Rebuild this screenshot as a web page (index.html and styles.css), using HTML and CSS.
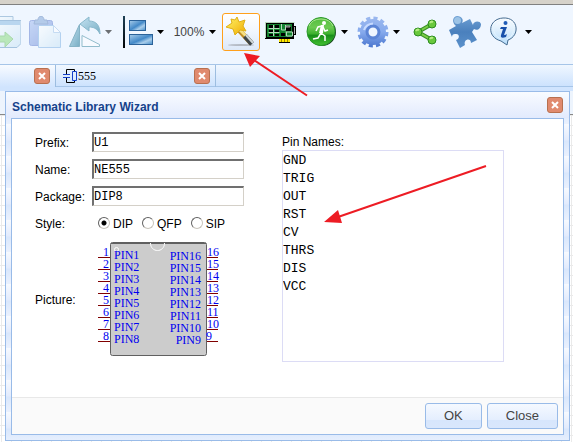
FILE: index.html
```html
<!DOCTYPE html>
<html lang="en">
<head>
<meta charset="utf-8">
<title>Schematic Library Wizard</title>
<link rel="stylesheet" href="styles.css">
</head>
<body>
<div class="app">
  <header class="toolbar">
    <button class="tool first disabled" aria-label="Import">
      <svg class="icon" viewBox="0 0 32 32"><defs><linearGradient id="page" x2="1" y2="1"><stop stop-color="#fff"/><stop offset="1" stop-color="#c6e2f4"/></linearGradient></defs><path d="M3 .5h21v26H3z" fill="url(#page)" stroke="#78a4c9"/><path d="M1 4.500h31v23l-4 4H1z" fill="url(#page)" stroke="#6a9bc6"/><path d="M1 5h30v4H1z" fill="#8ebde2"/><path d="M8 20h8v-4l8 7-8 8v-5H8z" fill="#8ddb83" stroke="#72c06c"/></svg>
    </button>
    <button class="tool disabled" aria-label="Paste">
      <svg class="icon" viewBox="0 0 32 32"><defs><linearGradient id="clip" x2="1" y2="1"><stop stop-color="#a6bff0"/><stop offset="1" stop-color="#6685d5"/></linearGradient></defs><rect x=".5" y="4.500" width="23" height="25" rx="2" fill="url(#clip)" stroke="#6683d2"/><path d="M6 4h3c0-5 6-5 6 0h3l1 4H5z" fill="#84a9d9" stroke="#6487be"/><path d="M9.500 9.500h15l7 7v15h-22z" fill="url(#page)" stroke="#83b3e5"/><path d="M24.500 9.500v7h7z" fill="#fff" stroke="#a3c5e8"/></svg>
    </button>
    <button class="tool menu disabled" aria-label="Rotate">
      <svg class="icon" viewBox="0 0 32 32"><defs><linearGradient id="teal" x2="1" y2="1"><stop stop-color="#a5d4e9"/><stop offset="1" stop-color="#187494"/></linearGradient></defs><path d="M10.500 8.500v22H.500z" fill="url(#teal)" stroke="#307d98"/><path d="M13 19.500l17.500 9v2H13z" fill="#fff" stroke="#478ea3"/><path d="M11 8l9-7v4c7 0 11 4 11 13-3-6-7-7-11-7v4z" fill="url(#teal)" stroke="#3787a4"/></svg>
      <svg class="caret" viewBox="0 0 8 4"><path d="M0 0h7L3.500 4z"/></svg>
    </button>
    <button class="tool menu" aria-label="Align">
      <svg class="icon" viewBox="0 0 32 32"><defs><linearGradient id="bar" x2="1" y2="1"><stop stop-color="#a9cdea"/><stop offset=".5" stop-color="#4389c8"/><stop offset=".7" stop-color="#a9cdea"/><stop offset="1" stop-color="#438cc9"/></linearGradient><linearGradient id="pole" x2="0" y2="1"><stop stop-color="#1e4056"/><stop offset="1" stop-color="#020304"/></linearGradient></defs><path d="M2 0h2v32H2z" fill="url(#pole)"/><rect x="8.500" y="4.500" width="16" height="10" fill="url(#bar)" stroke="#2b6299"/><rect x="8.500" y="18.500" width="23" height="10" fill="url(#bar)" stroke="#2b6299"/></svg>
      <svg class="caret" viewBox="0 0 8 4"><path d="M0 0h7L3.500 4z"/></svg>
    </button>
    <button class="tool menu" aria-label="Zoom">
      <span class="zoom">100%</span>
      <svg class="caret" viewBox="0 0 8 4"><path d="M0 0h7L3.500 4z"/></svg>
    </button>
    <button class="tool selected" aria-label="Schematic library wizard">
      <svg class="icon" viewBox="0 0 32 32"><defs><linearGradient id="star" x2="1" y2="1"><stop stop-color="#fff56a"/><stop offset="1" stop-color="#f0a900"/></linearGradient></defs><ellipse cx="16" cy="29" rx="13" ry="1" fill="#b5bbc5"/><path d="M14 14l12 13" stroke="#c28f24" stroke-width="5"/><path d="M15 14l7 7" stroke="#f5df82" stroke-width="3"/><path d="M20 20l7 8" stroke="#3e4549" stroke-width="5"/><path d="M21 19l7 8" stroke="#d0d7d8" stroke-width="2"/><path d="M12 1l2 5 6-2-2 6 3 5-6-1-5 5-2-6-7-2 6-4-1-4 4 1z" fill="url(#star)" stroke="#dfb018"/></svg>
    </button>
    <button class="tool" aria-label="Printed circuit board">
      <svg class="icon" viewBox="0 0 32 32"><path d="M0 6h29v4h2v9h-2v4h-4v4H14v-4H0z" fill="#000"/><path d="M2 8h25v13H2z" fill="#13832f"/><path d="M14 23h11v3H14z" fill="#ffe900"/><path d="M16.500 23v3m3-3v3m3-3v3" stroke="#9b8500"/><path d="M4 9h4v3H4zm6 0h4v3h-4zM4 14h4v2H4zm6 0h4v2h-4zM4 18h4v2H4zm6 0h4v2h-4zM21 10h5v5h-5zM16 17h4v3h-4z" fill="#000"/><path d="M3.500 12.500h11m-11 4h11M8.500 9v11M16.500 8v6h4v-5m0 7h7v4h-6v-4M.500 6v16m0-15.500h29" stroke="#b6d8bc" fill="none"/><path d="M21 10h4v1h-4zM29.500 11v7" stroke="#a8aca9" fill="none"/></svg>
    </button>
    <button class="tool menu" aria-label="Run simulation">
      <svg class="icon" viewBox="0 0 32 32"><defs><linearGradient id="run" x2="0" y2="1"><stop stop-color="#52bd3d"/><stop offset=".35" stop-color="#6cca52"/><stop offset=".6" stop-color="#3aaf2c"/><stop offset=".62" stop-color="#168c19"/><stop offset="1" stop-color="#42c030"/></linearGradient></defs><circle cx="17" cy="16" r="14" fill="#17421b"/><circle cx="16" cy="15.500" r="14" fill="url(#run)" stroke="#2b992b"/><path d="M4 10Q7 3 16 3t12 7" fill="none" stroke="#a8e48c"/><circle cx="19" cy="7" r="2" fill="#fff"/><path d="M17 10l-4 1-2 4m6-4l-1 6-3 5-5 1m8-6l4 3v5m-2-14l2 4 3-1" fill="none" stroke="#fff" stroke-width="1.500"/><path d="M16 9h3l-1 8h-4z" fill="#fff"/></svg>
      <svg class="caret" viewBox="0 0 8 4"><path d="M0 0h7L3.500 4z"/></svg>
    </button>
    <button class="tool menu" aria-label="Settings">
      <svg class="icon" viewBox="0 0 32 32"><defs><linearGradient id="gear" gradientUnits="userSpaceOnUse" x1="0" y1="0" x2="0" y2="32"><stop stop-color="#9db9ef"/><stop offset=".5" stop-color="#86aaed"/><stop offset="1" stop-color="#4874cd"/></linearGradient></defs><circle cx="16" cy="16" r="13.500" fill="none" stroke="url(#gear)" stroke-width="4" stroke-dasharray="4 3.069"/><circle cx="16" cy="16" r="9" fill="none" stroke="url(#gear)" stroke-width="8"/><circle cx="16" cy="16" r="6" fill="none" stroke="#5c85d6" stroke-width="3"/><path d="M7 14q2-6 9-6.500" fill="none" stroke="#c8dbff" stroke-width="2"/></svg>
      <svg class="caret" viewBox="0 0 8 4"><path d="M0 0h7L3.500 4z"/></svg>
    </button>
    <button class="tool" aria-label="Share">
      <svg class="icon" viewBox="0 0 32 32"><path d="M23 8L9 16l14 8" fill="none" stroke="#389125" stroke-width="4"/><path d="M23 8L9 16l14 8" fill="none" stroke="#7bce48" stroke-width="2"/><g fill="#69c83d" stroke="#2c8c20"><circle cx="23" cy="8" r="4"/><circle cx="9" cy="16" r="4"/><circle cx="23" cy="24" r="4"/></g><path d="M21 7q1-2 3-1M7 15q1-2 3-1m11 9q1-2 3-1" fill="none" stroke="#b6ed83" stroke-width="2"/></svg>
    </button>
    <button class="tool" aria-label="Plugins">
      <svg class="icon" viewBox="0 0 32 32"><defs><linearGradient id="piece" x2="0" y2="1"><stop stop-color="#6d9fd3"/><stop offset=".5" stop-color="#4a80bd"/><stop offset="1" stop-color="#5b91cb"/></linearGradient></defs><path d="M0 14l7-4C3 7 3 1 8 0c5 0 7 4 5 7l8-4 3 6c0-4 7-5 8-1 0 5-4 7-7 5l-2 3 5 8-6 3c0-6-8-4-6 2l-5 3-4-8c4-1 4-7-1-6-2 0-3 1-3 3z" fill="url(#piece)"/><circle cx="8.500" cy="4.500" r="3.500" fill="#9cc3e6"/></svg>
    </button>
    <button class="tool menu" aria-label="Help">
      <svg class="icon" viewBox="0 0 32 32"><defs><linearGradient id="bubble" x2="0" y2="1"><stop stop-color="#fff"/><stop offset="1" stop-color="#b6dcfa"/></linearGradient></defs><path d="M12 25C-3 21-1 3 14 2c16-1 17 18 5 22l-1 5-6-4z" fill="url(#bubble)" stroke="#456c91"/><path d="M12 23C2 19 2 5 14 4c13 0 13 16 4 19" fill="none" stroke="#e5f5ff"/><circle cx="16.500" cy="7" r="2" fill="#1e5cb7"/><path d="M12 11h6l-3 8q2 0 3-1l-1 3q-6 2-5-2l2-6h-3z" fill="#1750aa"/></svg>
      <svg class="caret" viewBox="0 0 8 4"><path d="M0 0h7L3.500 4z"/></svg>
    </button>
  </header>

  <nav class="tabs">
    <div class="tab active"><button class="close" aria-label="Close tab"><svg viewBox="0 0 8 8"><path d="M1 1l6 6M7 1L1 7"/></svg></button></div>
    <div class="tab wide">
      <svg class="symbol" viewBox="0 0 14 14"><path d="M3.500 5V.500h8V2M3.500 9v4.500h8V12" fill="none" stroke="#000"/><path d="M0 5.500h7M0 8.500h7M9.500 2.500h4v9h-4z" fill="none" stroke="#143fc8"/></svg>
      <span class="tab-name">555</span>
      <button class="close" aria-label="Close 555"><svg viewBox="0 0 8 8"><path d="M1 1l6 6M7 1L1 7"/></svg></button>
    </div>
  </nav>

  <main class="workspace">
    <div class="ruler"></div>
    <section class="dialog" role="dialog" aria-labelledby="dialog-title">
      <div class="dialog-head">
        <h1 id="dialog-title">Schematic Library Wizard</h1>
        <button class="close" aria-label="Close dialog"><svg viewBox="0 0 8 8"><path d="M1 1l6 6M7 1L1 7"/></svg></button>
      </div>
      <form class="panel">
        <div class="content">
          <div class="fields">
            <label for="prefix">Prefix:</label><input class="box" id="prefix" type="text" value="U1">
            <label for="name">Name:</label><input class="box" id="name" type="text" value="NE555">
            <label for="package">Package:</label><input class="box" id="package" type="text" value="DIP8">
            <span>Style:</span>
            <div class="choices">
              <label><input type="radio" name="style" checked>DIP</label>
              <label><input type="radio" name="style">QFP</label>
              <label><input type="radio" name="style">SIP</label>
            </div>
            <span>Picture:</span>
            <svg class="chip" viewBox="92 240 130 118">
              <path d="M98 257.500h12m-12 12h12m-12 12h12m-12 12h12m-12 12h12m-12 12h12m-12 12h12m-12 12h12M207 257.500h11m-11 12h11m-11 12h11m-11 12h11m-11 12h11m-11 12h11m-11 12h11m-11 12h11" transform="translate(0 0)" stroke="#800000" fill="none"/>
              <rect x="110.500" y="242.500" width="96" height="113" rx="2" fill="#ccc" stroke="#606060"/>
              <path d="M111 243.500h95" stroke="#606060"/>
              <circle cx="116.500" cy="249.500" r="2" fill="none" stroke="#fff"/>
              <path d="M150.500 243c0 10 14 10 14 0" fill="none" stroke="#fff"/>
              <g class="pin">
                <text x="114" y="259">PIN1</text><text x="114" y="271">PIN2</text><text x="114" y="283">PIN3</text><text x="114" y="295">PIN4</text><text x="114" y="307">PIN5</text><text x="114" y="319">PIN6</text><text x="114" y="331">PIN7</text><text x="114" y="343">PIN8</text>
                <text x="207" y="256">16</text><text x="207" y="268">15</text><text x="207" y="280">14</text><text x="207" y="292">13</text><text x="207" y="304">12</text><text x="207" y="316">11</text><text x="207" y="328">10</text><text x="206" y="340">9</text>
              </g>
              <g class="pin end">
                <text x="109" y="256">1</text><text x="109" y="268">2</text><text x="109" y="280">3</text><text x="109" y="292">4</text><text x="109" y="304">5</text><text x="109" y="316">6</text><text x="109" y="328">7</text><text x="109" y="340">8</text>
                <text x="201" y="260">PIN16</text><text x="201" y="272">PIN15</text><text x="201" y="284">PIN14</text><text x="201" y="296">PIN13</text><text x="201" y="308">PIN12</text><text x="201" y="320">PIN11</text><text x="201" y="332">PIN10</text><text x="201" y="344">PIN9</text>
              </g>
            </svg>
          </div>
          <div class="pins">
            <label for="pins">Pin Names:</label>
            <textarea id="pins" spellcheck="false">GND
TRIG
OUT
RST
CV
THRS
DIS
VCC</textarea>
          </div>
        </div>
        <div class="actions">
          <button type="button" class="action">OK</button>
          <button type="button" class="action">Close</button>
        </div>
      </form>
    </section>
  </main>
  <svg class="arrows" width="573" height="442" aria-hidden="true">
    <path d="M307 95.500L254 60M486 166L338 217" stroke="#ed1c24" stroke-width="2" fill="none"/>
    <path d="M244 53l16 3-10 11zM324 222l14-12 4 13z" fill="#ed1c24"/>
  </svg>
</div>
</body>
</html>
```
FILE: styles.css
```css
* {
  box-sizing: border-box;
}

body {
  margin: 0;
  font: 12px/16px "Liberation Sans", Arial, sans-serif;
  color: #000;
}

button {
  padding: 0;
  font: inherit;
}

svg {
  display: block;
  flex: none;
}

.app {
  position: relative;
  display: flex;
  flex-direction: column;
  min-height: 100vh;
  overflow: hidden;
}

/* Toolbar */
.toolbar {
  display: flex;
  gap: 2px;
  height: 65px;
  padding-top: 8px;
  background: #eff6ff;
  border-top: 4px solid #d6d2ca;
  border-bottom: 1px solid #a6c5e8;
  box-shadow: inset 0 1px #808080;
}

.tool {
  display: flex;
  flex: none;
  align-items: center;
  gap: 4px;
  width: 38px;
  height: 38px;
  margin-top: 1px;
  padding: 0 2px;
  background: none;
  border: 1px solid transparent;
  border-radius: 3px;
}

.tool.menu {
  width: 50px;
}

.tool.first {
  margin-left: -14px;
}

.tool.disabled {
  opacity: 0.55;
}

.tool.selected {
  background: linear-gradient(#fff, #f0f6ff 50%, #dce8f8);
  border-color: #ffa01c;
}

.icon {
  width: 32px;
  height: 32px;
}

.caret {
  width: 8px;
  height: 4px;
}

.zoom {
  width: 32px;
  color: #444;
}

/* Document tabs */
.tabs {
  display: flex;
  height: 26px;
  background: linear-gradient(#f0f7ff, #cbe1fd);
  border-bottom: 4px solid #d0e4fe;
  box-shadow: inset 0 -1px #a6c5e8;
}

.tab {
  display: flex;
  align-items: center;
  justify-content: flex-end;
  width: 56px;
  padding: 0 5px 0 7px;
  border-right: 1px solid #9dbde0;
}

.tab.active {
  background: linear-gradient(#f8fbff, #d0e4fe);
}

.tab.wide {
  width: 160px;
}

.symbol {
  width: 14px;
  height: 14px;
}

.tab-name {
  flex: 1;
  padding-left: 1px;
  font: 12px/16px "Liberation Serif", serif;
}

.close {
  display: grid;
  flex: none;
  place-items: center;
  width: 16px;
  height: 16px;
  background: #e08a6e;
  border: 1px solid #b8704f;
  border-radius: 3px;
}

.close svg {
  width: 8px;
  height: 8px;
  fill: none;
  stroke: #fff;
  stroke-width: 2;
}

/* Canvas and dialog */
.workspace {
  flex: 1;
  position: relative;
  min-height: 351px;
  background:
    linear-gradient(#eaeaea 1px, transparent 1px) 0 4px / 10px 10px,
    linear-gradient(90deg, #eaeaea 1px, transparent 1px) 1px 0 / 10px 10px,
    #fff;
}

.ruler {
  height: 24px;
  background: #edf4fd;
  border-bottom: 1px solid #888;
}

.dialog {
  position: absolute;
  top: 0;
  left: 5px;
  right: 3px;
  padding: 0 5px 5px;
  background: repeating-linear-gradient(#f7faff, #e2ebfd 16px, #d9e7fc 17px, #eaf1fe 32px);
  border: 1px solid #99bbe8;
}

.dialog-head {
  display: flex;
  align-items: center;
  justify-content: space-between;
  height: 26px;
  margin: 0 -5px;
  padding: 0 6px;
  background: linear-gradient(#f8fbff, #e2eafd);
}

h1 {
  margin: 0;
  padding-top: 3px;
  font-size: 12px;
  line-height: 16px;
  color: #15428b;
}

.panel {
  background: #fff;
  border: 1px solid #99bbe8;
}

.content {
  display: flex;
  gap: 38px;
  padding: 13px 59px 35px 23px;
}

.fields {
  display: grid;
  grid-template-columns: 57px 152px;
  grid-template-rows: repeat(4, 20px) 118px;
  row-gap: 7px;
  align-items: center;
}

.fields > label {
  padding-top: 2px;
}

.box {
  width: 100%;
  height: 20px;
  padding: 0;
  font: 12px/16px "Liberation Mono", monospace;
  background: #fff;
  border: 2px solid;
  border-color: #707070 #d4d0c8 #d4d0c8 #707070;
  border-width: 2px 1px 1px 2px;
  border-radius: 0;
}

.choices {
  display: flex;
  gap: 9px;
  padding-left: 6px;
}

.choices label {
  display: flex;
  align-items: center;
  gap: 3px;
}

.choices input {
  appearance: none;
  width: 12px;
  height: 12px;
  margin: 0 0 3px;
  background: #fff;
  border: 1px solid;
  border-color: #606060 #c8c4bc #c8c4bc #606060;
  border-radius: 50%;
}

.choices input:checked {
  background: radial-gradient(circle, #000 2px, #fff 3px);
}

.choices,
.fields > span {
  padding-top: 2px;
}

.chip {
  width: 130px;
  height: 118px;
}

.pin {
  font: 12px "Liberation Serif", serif;
  fill: #0000f0;
}

.end {
  text-anchor: end;
}

.pins {
  display: flex;
  flex: 1;
  flex-direction: column;
  padding-top: 2px;
}

textarea {
  width: 100%;
  height: 212px;
  padding: 1px 0;
  font: 13px/18px "Liberation Mono", monospace;
  border: 1px solid #dcdcf5;
  resize: none;
}

.actions {
  display: flex;
  justify-content: flex-end;
  gap: 5px;
  padding: 5px;
  background: #fafafa;
  border-top: 1px solid #e8e8e8;
}

.action {
  height: 26px;
  padding: 0 18px;
  font-size: 13px;
  color: #444;
  background: linear-gradient(#f5f9ff, #e4eefe 66%, #d7e6fc 68%, #d9e7fc);
  border: 1px solid #99bbe8;
  border-radius: 3px;
}

/* Callouts over the page */
.arrows {
  position: absolute;
  top: 0;
  left: 0;
  pointer-events: none;
}
```
